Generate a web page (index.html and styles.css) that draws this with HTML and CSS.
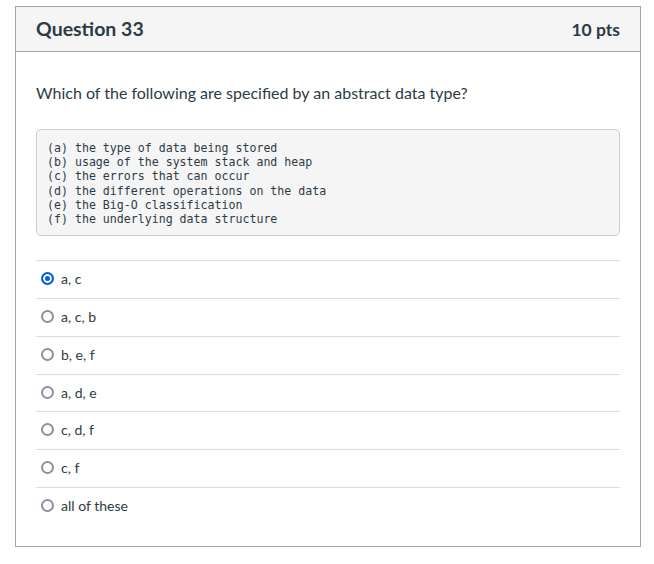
FILE: index.html
```html
<!DOCTYPE html>
<html>
<head>
<meta charset="utf-8">
<link rel="stylesheet" href="styles.css">
</head>
<body>
<div class="card">
  <div class="header">
    <span class="title">Question 33</span>
    <span class="pts">10 pts</span>
  </div>
  <div class="content">
    <p class="question">Which of the following are specified by an abstract data type?</p>
    <pre class="code">(a) the type of data being stored
(b) usage of the system stack and heap
(c) the errors that can occur
(d) the different operations on the data
(e) the Big-O classification
(f) the underlying data structure</pre>
    <div class="answers">
      <label class="answer"><input class="radio" type="radio" name="q" checked><span>a, c</span></label>
      <label class="answer"><input class="radio" type="radio" name="q"><span>a, c, b</span></label>
      <label class="answer"><input class="radio" type="radio" name="q"><span>b, e, f</span></label>
      <label class="answer"><input class="radio" type="radio" name="q"><span>a, d, e</span></label>
      <label class="answer"><input class="radio" type="radio" name="q"><span>c, d, f</span></label>
      <label class="answer"><input class="radio" type="radio" name="q"><span>c, f</span></label>
      <label class="answer"><input class="radio" type="radio" name="q"><span>all of these</span></label>
    </div>
  </div>
</div>
</body>
</html>
```
FILE: styles.css
```css
html, body {
  margin: 0;
  padding: 0;
  background: #fff;
}
body {
  font-family: Lato, "Open Sans", sans-serif;
  color: #2d3b45;
}
.card {
  margin: 6px 0 0 15px;
  width: 624px;
  height: 539px;
  border: 1px solid #a5a5a5;
}
.header {
  height: 44px;
  background: #f5f5f5;
  border-bottom: 1px solid #a5a5a5;
  display: flex;
  align-items: center;
  justify-content: space-between;
  padding: 0 20px;
}
.title {
  font-weight: bold;
  font-size: 19.5px;
  margin-top: -2px;
}
.pts {
  font-weight: bold;
  font-size: 17.5px;
}
.content {
  padding: 29px 20px 20px 20px;
}
.question {
  margin: 0;
  font-size: 16px;
  line-height: 24px;
}
.code {
  margin: 24px 0 0 0;
  padding: 11px 10px 9px 10px;
  background: #f5f5f5;
  border: 1px solid #c7cdd1;
  border-radius: 5px;
  font-family: "DejaVu Sans Mono", monospace;
  font-size: 11.6px;
  line-height: 14.2px;
  color: #2d3b45;
}
.answers {
  margin-top: 24px;
  display: flex;
  flex-direction: column;
}
.answer {
  box-sizing: border-box;
  height: 37.8px;
  padding-bottom: 2px;
  border-top: 1px solid #dcdcdc;
  display: flex;
  align-items: center;
  font-size: 14px;
}
.radio {
  appearance: none;
  -webkit-appearance: none;
  box-sizing: border-box;
  width: 13px;
  height: 13px;
  margin: 0 7px 0 5px;
  border: 2px solid #8f8f9d;
  border-radius: 50%;
  background: #fff;
}
.radio:checked {
  border-color: #0060df;
  background: #0060df;
  box-shadow: inset 0 0 0 2px #fff;
}
```
